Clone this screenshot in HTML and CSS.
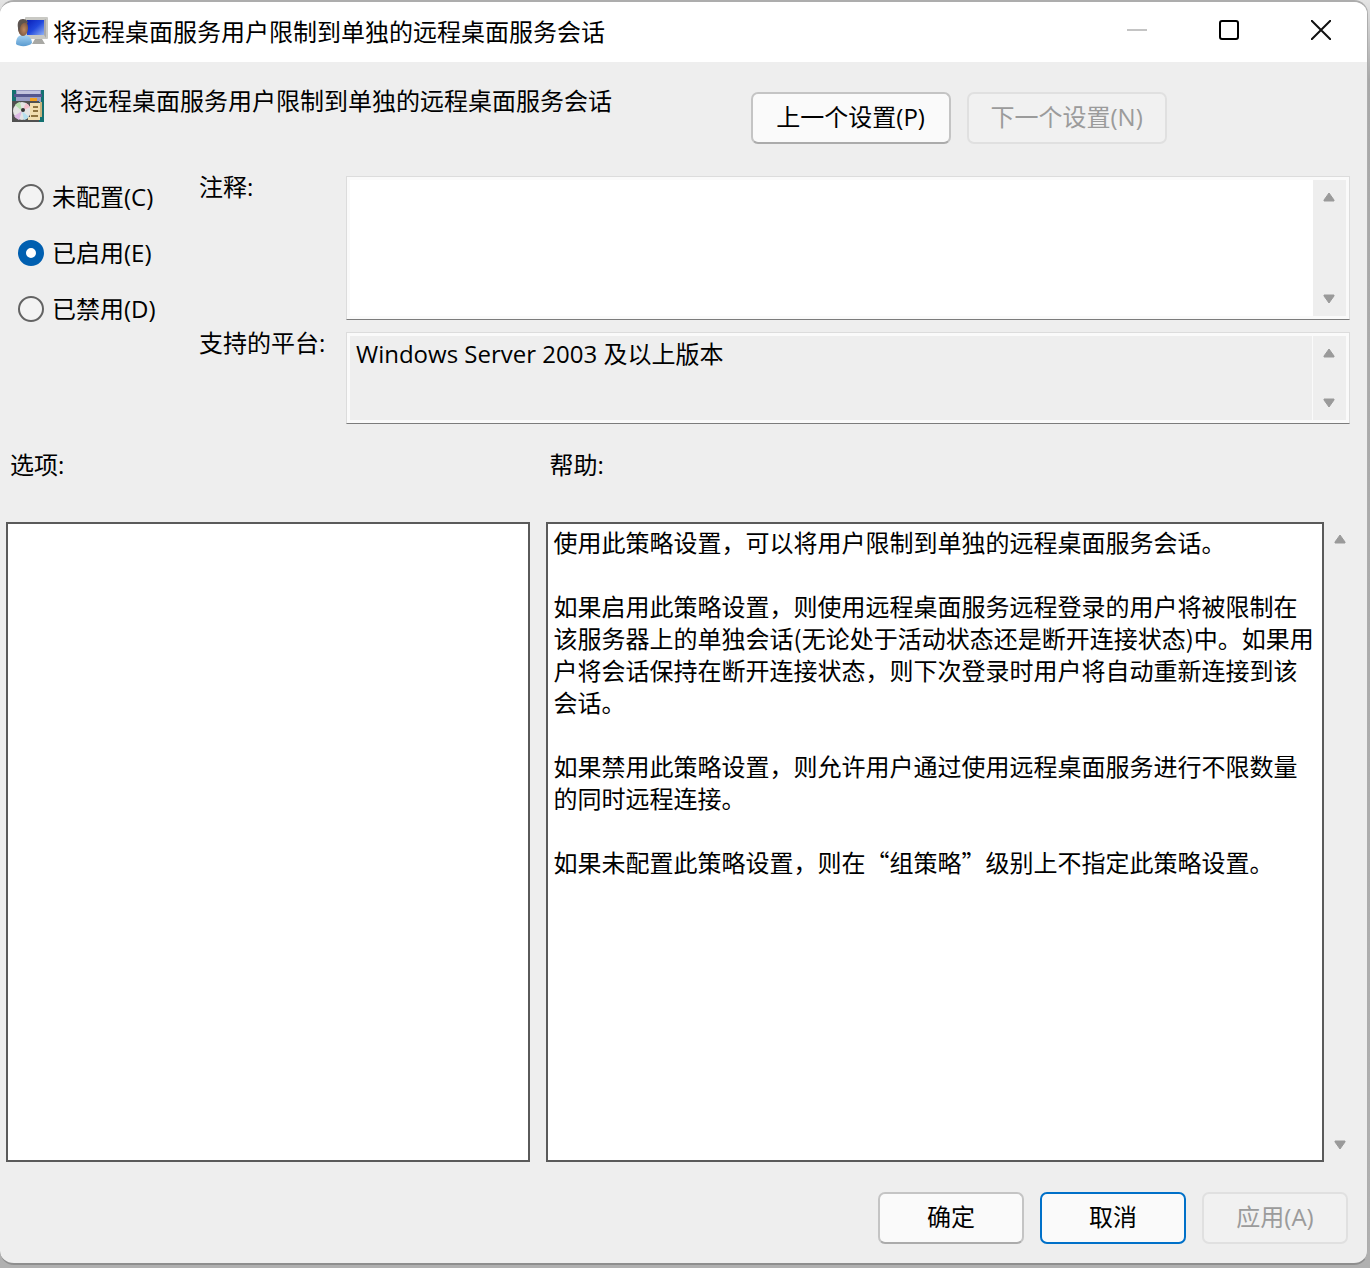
FILE: index.html
```html
<!DOCTYPE html>
<html lang="zh-CN">
<head>
  <meta charset="UTF-8">
  <title>将远程桌面服务用户限制到单独的远程桌面服务会话</title>
  <link rel="stylesheet" href="styles.css">
</head>
<body>

  <main class="dialog">
    <header class="titlebar">
      <svg class="app-icon" width="32" height="32" viewBox="0 0 32 32">
        <defs>
          <linearGradient id="screen" x1="0" y1="0" x2="1" y2="1">
            <stop offset="0" stop-color="#0a1fb8"/>
            <stop offset="0.5" stop-color="#2148dc"/>
            <stop offset="1" stop-color="#8fb0f4"/>
          </linearGradient>
          <linearGradient id="shirt" x1="0" y1="0" x2="0" y2="1">
            <stop offset="0" stop-color="#a5d2f2"/>
            <stop offset="1" stop-color="#5a9bd0"/>
          </linearGradient>
          <radialGradient id="face" cx="0.6" cy="0.6" r="0.6">
            <stop offset="0" stop-color="#c08a60"/>
            <stop offset="1" stop-color="#6b4a38"/>
          </radialGradient>
        </defs>
        <path d="M19 23h7l3 5H16z" fill="#a8a8a4"/>
        <rect x="9" y="1" width="23" height="22" rx="1" fill="#c9c9c4"/>
        <rect x="11" y="4" width="17" height="15" fill="url(#screen)"/>
        <path d="M28 4l2-1v19l-2-3z" fill="#aaa"/>
        <path d="M0 28c0-7 3-9 7-9s9 2 9 8c-3 4-13 4-16 1z" fill="url(#shirt)"/>
        <ellipse cx="7" cy="12" rx="5" ry="8" fill="url(#face)"/>
        <path d="M2 12C1 6 3 3 7 3s5 3 5 4c-4-1-7 0-8 5l-1 4z" fill="#5c5450"/>
      </svg>
      <span class="titlebar-text">将远程桌面服务用户限制到单独的远程桌面服务会话</span>
      <div class="window-buttons">
        <button type="button" aria-label="最小化" disabled>
          <svg width="20" height="20" viewBox="0 0 20 20"><path d="M0 10h20" stroke="#c4c4c4" stroke-width="2"/></svg>
        </button>
        <button type="button" aria-label="最大化">
          <svg width="20" height="20" viewBox="0 0 20 20"><rect x="1" y="1" width="18" height="18" rx="2" fill="none" stroke="#000" stroke-width="2"/></svg>
        </button>
        <button type="button" aria-label="关闭">
          <svg width="20" height="20" viewBox="0 0 20 20"><path d="M0 0l20 20M20 0L0 20" stroke="#111" stroke-width="2"/></svg>
        </button>
      </div>
    </header>

    <section class="policy-header">
      <div class="policy-name">
        <svg width="32" height="32" viewBox="0 0 32 32">
          <rect width="32" height="32" fill="#137070"/>
          <rect x="4" width="25" height="12" fill="#9a9cc4"/>
          <rect x="5" y="1" width="23" height="3" fill="#c3c4de"/>
          <rect x="2" y="4" width="28" height="3" fill="#54568e"/>
          <rect x="18" y="8" width="7" height="3" fill="#f0a020"/>
          <rect y="11" width="27" height="21" fill="#505050"/>
          <circle cx="10" cy="21" r="9" fill="#e4e4e4"/>
          <path d="M10 21L3 15a9 9 0 0 1 5-3z" fill="#b8e0b0"/>
          <path d="M10 21l7 6a9 9 0 0 1-5 3z" fill="#b6dff0"/>
          <path d="M10 21l-8 5a9 9 0 0 0 5 4z" fill="#dcb8e4"/>
          <path d="M10 21l4-8a9 9 0 0 1 4 4z" fill="#f3c0cc"/>
          <circle cx="11" cy="20" r="2" fill="#333"/>
          <path d="M18 13h12v14h-2v3H16v-3h2z" fill="#f0deb0"/>
          <path d="M21 17h5M21 21h5M19 26h7" stroke="#8d7440" stroke-width="2"/>
          <path d="M28 12h2v15h-2z" fill="#c9b27c"/>
        </svg>
        <span>将远程桌面服务用户限制到单独的远程桌面服务会话</span>
      </div>
      <div class="policy-nav">
        <button type="button" class="btn btn-wide">上一个设置(P)</button>
        <button type="button" class="btn btn-wide" disabled>下一个设置(N)</button>
      </div>
    </section>

    <section class="settings">
      <div class="states">
        <label><input type="radio" name="state">未配置(C)</label>
        <label><input type="radio" name="state" checked>已启用(E)</label>
        <label><input type="radio" name="state">已禁用(D)</label>
      </div>

      <label class="field-label" for="comment">注释:</label>
      <div class="field field-comment">
        <textarea id="comment"></textarea>
        <div class="scrollbar">
          <svg width="12" height="10" viewBox="0 0 12 10"><path d="M6 1l5 7v1H1V8z"/></svg>
          <svg width="12" height="10" viewBox="0 0 12 10"><path d="M6 9L1 2V1h10v1z"/></svg>
        </div>
      </div>

      <label class="field-label" for="platform">支持的平台:</label>
      <div class="field field-platform">
        <textarea id="platform" readonly>Windows Server 2003 及以上版本</textarea>
        <div class="scrollbar">
          <svg width="12" height="10" viewBox="0 0 12 10"><path d="M6 1l5 7v1H1V8z"/></svg>
          <svg width="12" height="10" viewBox="0 0 12 10"><path d="M6 9L1 2V1h10v1z"/></svg>
        </div>
      </div>
    </section>

    <section class="panels">
      <div class="panel">
        <h2>选项:</h2>
        <div class="panel-box"></div>
      </div>
      <div class="panel">
        <h2>帮助:</h2>
        <div class="panel-row">
          <div class="panel-box help-text">
            <p>使用此策略设置，可以将用户限制到单独的远程桌面服务会话。</p>
            <p>如果启用此策略设置，则使用远程桌面服务远程登录的用户将被限制在该服务器上的单独会话(无论处于活动状态还是断开连接状态)中。如果用户将会话保持在断开连接状态，则下次登录时用户将自动重新连接到该会话。</p>
            <p>如果禁用此策略设置，则允许用户通过使用远程桌面服务进行不限数量的同时远程连接。</p>
            <p>如果未配置此策略设置，则在“组策略”级别上不指定此策略设置。</p>
          </div>
          <div class="scrollbar">
            <svg width="12" height="10" viewBox="0 0 12 10"><path d="M6 1l5 7v1H1V8z"/></svg>
            <svg width="12" height="10" viewBox="0 0 12 10"><path d="M6 9L1 2V1h10v1z"/></svg>
          </div>
        </div>
      </div>
    </section>

    <footer class="actions">
      <button type="button" class="btn">确定</button>
      <button type="button" class="btn btn-default">取消</button>
      <button type="button" class="btn" disabled>应用(A)</button>
    </footer>
  </main>

</body>
</html>
```

FILE: styles.css
```css
* {
  box-sizing: border-box;
}

body {
  margin: 0;
  padding: 0 2px 3px 0;
  min-height: 100vh;
  display: flex;
  background: linear-gradient(#e4e4e4, #a8a8a8 80px, #b0b0b0);
  color: #000;
  font: 24px/32px "Open Sans", "Noto Sans CJK SC", sans-serif;
}

button, textarea {
  font: inherit;
  color: inherit;
}

.dialog {
  flex: 1;
  display: flex;
  flex-direction: column;
  background: #eee;
  border: solid #adadad;
  border-width: 2px 1px 2px 0;
  border-bottom-color: #8e8e8e;
  border-radius: 14px;
  overflow: hidden;
}

/* title bar */
.titlebar {
  display: flex;
  align-items: center;
  height: 60px;
  padding-left: 16px;
  background: #fff;
}

.app-icon {
  margin-right: 5px;
}

.titlebar-text {
  flex: 1;
}

.window-buttons {
  display: flex;
  align-self: flex-start;
  height: 56px;
}

.window-buttons button {
  display: flex;
  align-items: center;
  justify-content: center;
  width: 92px;
  padding: 0;
  border: 0;
  background: none;
}

/* policy name and previous / next */
.policy-header {
  display: flex;
  padding: 28px 12px 0;
}

.policy-name {
  display: flex;
  gap: 16px;
  width: 55%;
}

.policy-name span {
  margin-top: -5px;
}

.policy-nav {
  display: flex;
  gap: 16px;
  padding-top: 2px;
}

.btn {
  width: 146px;
  height: 52px;
  padding: 0 0 2px;
  border: 2px solid #c4c4c4;
  border-bottom-color: #ababab;
  border-radius: 7px;
  background: #fafafa;
}

.btn-wide {
  width: 200px;
}

.btn-default {
  border-color: #0070c8;
}

.btn:disabled {
  border-color: #e0e0e0;
  background: #f1f1f1;
  color: #9b9b9b;
}

/* state, comment, platform */
.settings {
  display: grid;
  grid-template-columns: 182px 147px 1fr;
  row-gap: 12px;
  padding: 32px 17px 0 17px;
}

.states {
  grid-row: span 2;
  display: flex;
  flex-direction: column;
  gap: 24px;
  padding: 5px 0 0 1px;
}

.states label {
  display: flex;
  align-items: center;
  gap: 8px;
}

.states input {
  appearance: none;
  width: 26px;
  height: 26px;
  margin: 0;
  border: 2px solid #636363;
  border-radius: 50%;
  background: #f3f3f3;
}

.states input:checked {
  border: 8px solid #005fb0;
  background: #fff;
}

.field-label {
  margin-top: -5px;
}

.field {
  display: flex;
  padding: 3px;
  border: 1px solid #dcdcdc;
  border-bottom-color: #7c7c7c;
  background: #fafafa;
}

.field-comment {
  height: 144px;
}

.field-platform {
  height: 92px;
}

.field textarea {
  flex: 1;
  min-width: 0;
  padding: 2px 6px;
  border: 0;
  outline: 0;
  resize: none;
  overflow: hidden;
  background: #fff;
}

.field-platform textarea {
  margin-right: 1px;
  background: #eee;
}

.scrollbar {
  display: flex;
  flex-direction: column;
  align-items: center;
  justify-content: space-between;
  width: 33px;
  padding: 12px 2px 12px 0;
  background: #eee;
}

.scrollbar path {
  fill: #9a9a9a;
  stroke: #9a9a9a;
  stroke-linejoin: round;
}

/* options and help */
.panels {
  flex: 1;
  display: grid;
  grid-template-columns: 131fr 203fr;
  gap: 16px;
  padding: 25px 10px 0 6px;
}

.panel {
  display: flex;
  flex-direction: column;
}

.panel h2 {
  margin: 0 0 41px 4px;
  font-size: 24px;
  font-weight: normal;
}

.panel-box {
  flex: 1;
  border: 2px solid #5a5a5a;
  background: #fff;
}

.panel-row {
  flex: 1;
  display: flex;
}

.help-text {
  padding: 2px 6px;
  font-family: "Noto Sans CJK SC", sans-serif;
}

.help-text p {
  margin: 0 0 32px;
}

/* bottom buttons */
.actions {
  display: flex;
  justify-content: flex-end;
  gap: 16px;
  padding: 30px 19px 19px;
}
```
